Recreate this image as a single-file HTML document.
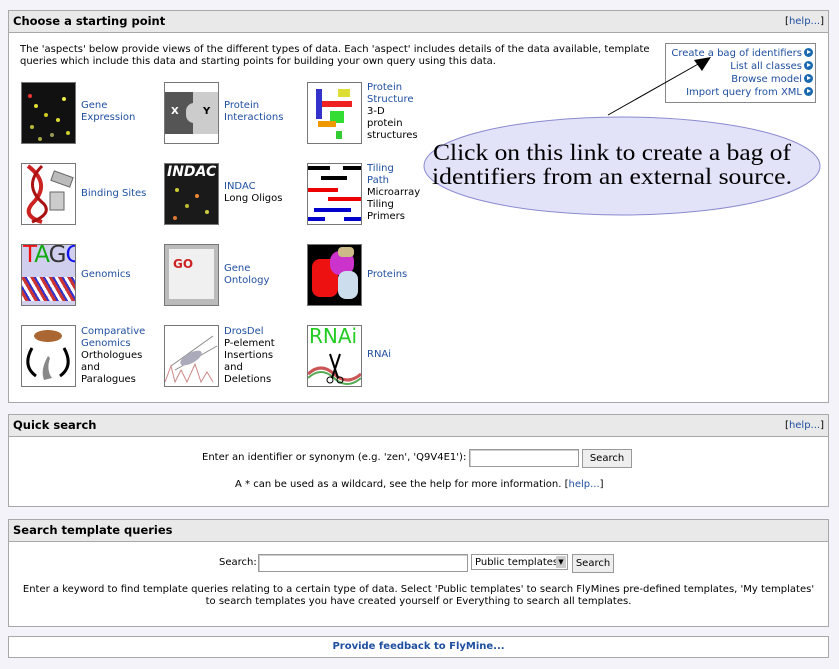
<!DOCTYPE html>
<html><head><style>
body{margin:0;background:#f4f3f9;width:839px;height:669px;position:relative;font-family:"DejaVu Sans","Liberation Sans",sans-serif;font-size:10px;color:#000;overflow:hidden}
.box{position:absolute;left:8px;width:819px;background:#fff;border:1px solid #a8a8a8}
.hd{height:21px;background:#e9e9e9;border-bottom:1px solid #a8a8a8;font-weight:bold;font-size:11.5px;line-height:21px;padding-left:4px;position:relative}
.help{position:absolute;right:4px;top:0;font-weight:normal;font-size:10px;color:#000}
a,.l{color:#1f4fa0;text-decoration:none}
.ic{position:absolute;width:53px;height:60px;border:1px solid #777;overflow:hidden}
.lab{position:absolute;line-height:12px;font-size:10px}
.abs{position:absolute}
input.t{position:absolute;height:16px;border:1px solid #999;box-shadow:inset 1px 1px 0 #ccc;background:#fff;padding:0}
.btn{position:absolute;height:17px;border:1px solid #999;background:#eee;font-size:10px;line-height:17px;text-align:center}
.dot{position:absolute;width:4px;height:4px;border-radius:2px}
.arr{display:inline-block;width:9px;height:9px;border-radius:5px;background:#1a6ab0;vertical-align:-1px;margin-left:2px;position:relative}
.arr:after{content:"";position:absolute;left:3px;top:2px;border-left:4px solid #fff;border-top:2.5px solid transparent;border-bottom:2.5px solid transparent}
</style></head><body>

<div class="box" style="top:10px;height:391px">
 <div class="hd">Choose a starting point<span class="help">[<a>help...</a>]</span></div>
 <div class="abs" style="left:11px;top:33px;line-height:12px;width:650px">The 'aspects' below provide views of the different types of data. Each 'aspect' includes details of the data available, template queries which include this data and starting points for building your own query using this data.</div>
</div>

<div class="abs" style="left:665px;top:43px;width:151px;height:60px;border:1px solid #888;background:#fff;text-align:right;line-height:13px;padding-top:3px;box-sizing:border-box;padding-right:2px">
<a>Create a bag of identifiers</a><span class="arr"></span><br><a>List all classes</a><span class="arr"></span><br><a>Browse model</a><span class="arr"></span><br><a>Import query from XML</a><span class="arr"></span>
</div>

<div class="ic" style="left:21px;top:82px;background:#111">
 <div class="dot" style="left:6px;top:11px;background:#e33"></div><div class="dot" style="left:12px;top:21px;background:#dd3"></div><div class="dot" style="left:22px;top:30px;background:#cc2"></div><div class="dot" style="left:40px;top:14px;background:#ee4"></div><div class="dot" style="left:34px;top:35px;background:#dd3"></div><div class="dot" style="left:8px;top:42px;background:#bb3"></div><div class="dot" style="left:44px;top:48px;background:#cc3"></div><div class="dot" style="left:28px;top:50px;background:#995"></div><div class="dot" style="left:16px;top:54px;background:#aa4"></div>
</div>
<div class="lab l" style="left:81px;top:100px">Gene<br>Expression</div>

<div class="ic" style="left:164px;top:82px;background:#fff">
 <div class="abs" style="left:0;top:9px;width:28px;height:42px;background:#555"></div>
 <div class="abs" style="left:28px;top:9px;width:25px;height:42px;background:#ccc"></div>
 <div class="abs" style="left:21px;top:20px;width:14px;height:20px;border-radius:8px 0 0 8px;background:#ccc"></div>
 <div class="abs" style="left:6px;top:23px;color:#fff;font-weight:bold">X</div>
 <div class="abs" style="left:38px;top:23px;font-weight:bold">Y</div>
</div>
<div class="lab l" style="left:224px;top:100px">Protein<br>Interactions</div>

<div class="ic" style="left:307px;top:82px;background:#fff">
 <div class="abs" style="left:8px;top:6px;width:6px;height:30px;background:#33c"></div>
 <div class="abs" style="left:14px;top:18px;width:30px;height:6px;background:#e22"></div>
 <div class="abs" style="left:22px;top:28px;width:14px;height:12px;background:#3d3"></div>
 <div class="abs" style="left:10px;top:38px;width:18px;height:6px;background:#e90"></div>
 <div class="abs" style="left:30px;top:6px;width:12px;height:8px;background:#dd3"></div>
 <div class="abs" style="left:28px;top:48px;width:6px;height:8px;background:#3c3"></div>
</div>
<div class="lab" style="left:367px;top:82px"><span class="l">Protein<br>Structure</span><br>3-D<br>protein<br>structures</div>

<div class="ic" style="left:21px;top:163px;background:#fff">
 <svg width="53" height="60"><path d="M6 2 Q30 20 10 40 Q0 52 20 58" stroke="#c22" stroke-width="4" fill="none"/><path d="M20 2 Q0 22 22 40 Q30 50 10 58" stroke="#a11" stroke-width="3" fill="none"/><rect x="30" y="10" width="20" height="10" fill="#bbb" stroke="#666" transform="rotate(20 40 15)"/><rect x="28" y="28" width="14" height="18" fill="#ccc" stroke="#666"/></svg>
</div>
<div class="lab l" style="left:81px;top:188px">Binding Sites</div>

<div class="ic" style="left:164px;top:163px;background:#1a1a1a">
 <div class="abs" style="left:2px;top:0;color:#fff;font-weight:bold;font-style:italic;font-size:14px">INDAC</div>
 <div class="dot" style="left:10px;top:24px;background:#cc3"></div><div class="dot" style="left:30px;top:30px;background:#e83"></div><div class="dot" style="left:20px;top:40px;background:#bb3"></div><div class="dot" style="left:40px;top:46px;background:#cc4"></div><div class="dot" style="left:8px;top:52px;background:#d73"></div>
</div>
<div class="lab" style="left:224px;top:181px"><span class="l">INDAC</span><br>Long Oligos</div>

<div class="ic" style="left:307px;top:163px;background:#fff">
 <div class="abs" style="left:0;top:2px;width:22px;height:4px;background:#000"></div><div class="abs" style="left:35px;top:2px;width:18px;height:4px;background:#000"></div>
 <div class="abs" style="left:13px;top:12px;width:26px;height:4px;background:#000"></div>
 <div class="abs" style="left:0;top:24px;width:30px;height:4px;background:#e00"></div><div class="abs" style="left:20px;top:33px;width:33px;height:4px;background:#e00"></div>
 <div class="abs" style="left:6px;top:44px;width:37px;height:4px;background:#00c"></div><div class="abs" style="left:0;top:53px;width:17px;height:4px;background:#00c"></div><div class="abs" style="left:36px;top:53px;width:17px;height:4px;background:#00c"></div>
</div>
<div class="lab" style="left:367px;top:163px"><span class="l">Tiling<br>Path</span><br>Microarray<br>Tiling<br>Primers</div>

<div class="ic" style="left:21px;top:244px;background:#d0d0ee">
 <div class="abs" style="left:1px;top:-3px;font-size:23px;letter-spacing:-1px"><span style="color:#e11">T</span><span style="color:#1a1">A</span><span style="color:#333">G</span><span style="color:#11e">C</span></div>
 <div class="abs" style="left:0;top:32px;width:53px;height:24px;background:repeating-linear-gradient(60deg,#fff 0 3px,#c33 3px 6px,#33c 6px 8px)"></div>
</div>
<div class="lab l" style="left:81px;top:269px">Genomics</div>

<div class="ic" style="left:164px;top:244px;background:#bbb">
 <div class="abs" style="left:4px;top:4px;width:45px;height:50px;background:#f0f0f0"></div>
 <div class="abs" style="left:8px;top:12px;color:#c22;font-weight:bold;font-size:12px">GO</div>
</div>
<div class="lab l" style="left:224px;top:263px">Gene<br>Ontology</div>

<div class="ic" style="left:307px;top:244px;background:#000">
 <div class="abs" style="left:4px;top:14px;width:26px;height:38px;background:#e11;border-radius:8px"></div>
 <div class="abs" style="left:22px;top:6px;width:24px;height:24px;background:#c3c;border-radius:10px"></div>
 <div class="abs" style="left:30px;top:26px;width:20px;height:28px;background:#cde;border-radius:8px"></div>
 <div class="abs" style="left:30px;top:2px;width:16px;height:10px;background:#cb8;border-radius:4px"></div>
</div>
<div class="lab l" style="left:367px;top:269px">Proteins</div>

<div class="ic" style="left:21px;top:325px;background:#fff">
 <svg width="53" height="60"><ellipse cx="26" cy="10" rx="14" ry="6" fill="#a63"/><path d="M10 22 Q0 40 14 50" stroke="#000" stroke-width="3" fill="none"/><path d="M42 22 Q52 40 38 50" stroke="#000" stroke-width="3" fill="none"/><path d="M26 30 Q18 44 22 54 L30 52 Q24 44 28 32Z" fill="#888"/></svg>
</div>
<div class="lab" style="left:81px;top:326px"><span class="l">Comparative<br>Genomics</span><br>Orthologues<br>and<br>Paralogues</div>

<div class="ic" style="left:164px;top:325px;background:#fff">
 <svg width="53" height="60"><path d="M6 40 L48 10 M10 44 L52 20" stroke="#888" fill="none"/><ellipse cx="26" cy="32" rx="12" ry="5" fill="#aab" transform="rotate(-30 26 32)"/><path d="M0 56 L6 40 L10 56 L16 44 L22 56 L30 38 L36 56 L42 46 L48 56" stroke="#c88" fill="none"/></svg>
</div>
<div class="lab" style="left:224px;top:326px"><span class="l">DrosDel</span><br>P-element<br>Insertions<br>and<br>Deletions</div>

<div class="ic" style="left:307px;top:325px;background:#fff">
 <div class="abs" style="left:1px;top:-2px;color:#2c2;font-size:20px">RNAi</div>
 <svg class="abs" style="left:0;top:26px" width="53" height="34"><path d="M0 22 Q13 10 26 22 T53 22" stroke="#c55" stroke-width="3" fill="none"/><path d="M0 26 Q13 14 26 26 T53 26" stroke="#5a5" stroke-width="2" fill="none"/><path d="M22 2 L30 26 M32 2 L24 26" stroke="#000" stroke-width="2"/><circle cx="22" cy="28" r="3" fill="none" stroke="#000"/><circle cx="32" cy="28" r="3" fill="none" stroke="#000"/></svg>
</div>
<div class="lab l" style="left:367px;top:349px">RNAi</div>

<svg class="abs" style="left:0;top:0" width="839" height="669">
 <ellipse cx="622" cy="166" rx="198" ry="49" fill="#e2e2f8" stroke="#8a8ad0"/>
 <line x1="608" y1="115" x2="700" y2="63" stroke="#000"/>
 <polygon points="711,57 694,60 702,71" fill="#000"/>
 <text x="612" y="160" text-anchor="middle" font-family="Liberation Serif,serif" font-size="23" textLength="358" lengthAdjust="spacingAndGlyphs">Click on this link to create a bag of</text>
 <text x="612" y="184" text-anchor="middle" font-family="Liberation Serif,serif" font-size="23" textLength="360" lengthAdjust="spacingAndGlyphs">identifiers from an external source.</text>
</svg>

<div class="box" style="top:414px;height:91px">
 <div class="hd">Quick search<span class="help">[<a>help...</a>]</span></div>
 <div class="abs" style="left:193px;top:37px">Enter an identifier or synonym (e.g. 'zen', 'Q9V4E1'):</div>
 <input class="t" style="left:460px;top:34px;width:108px">
 <div class="btn" style="left:573px;top:34px;width:48px">Search</div>
 <div class="abs" style="left:226px;top:64px">A * can be used as a wildcard, see the help for more information. [<a>help...</a>]</div>
</div>

<div class="box" style="top:519px;height:106px">
 <div class="hd">Search template queries</div>
 <div class="abs" style="left:210px;top:37px">Search:</div>
 <input class="t" style="left:249px;top:34px;width:208px">
 <div class="abs" style="left:462px;top:34px;height:16px;border:1px solid #999;background:#fff;line-height:16px;padding-left:3px;box-sizing:border-box;width:97px;overflow:hidden">Public templates<span style="position:absolute;right:1px;top:1px;width:10px;height:12px;background:#ccc;font-size:7px;line-height:12px;text-align:center">▼</span></div>
 <div class="btn" style="left:563px;top:34px;width:40px">Search</div>
 <div class="abs" style="left:0;top:64px;width:819px;text-align:center;line-height:12px">Enter a keyword to find template queries relating to a certain type of data. Select 'Public templates' to search FlyMines pre-defined templates, 'My templates'<br>to search templates you have created yourself or Everything to search all templates.</div>
</div>

<div class="box" style="top:636px;height:20px;text-align:center;line-height:20px;font-weight:bold"><a>Provide feedback to FlyMine...</a></div>

</body></html>
